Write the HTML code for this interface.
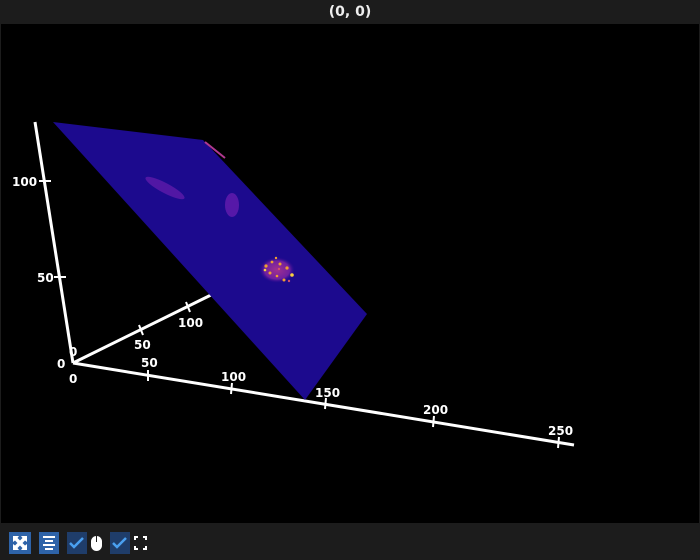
<!DOCTYPE html>
<html><head><meta charset="utf-8"><style>
html,body{margin:0;padding:0;background:#1c1c1c;width:700px;height:560px;overflow:hidden;font-family:"DejaVu Sans","Liberation Sans",sans-serif}
.top{position:absolute;left:0;top:0;width:700px;height:24px;background:#1c1c1c;color:#eee;font-size:14px;font-weight:bold;text-align:center;line-height:25px}
.main{position:absolute;left:1px;top:24px;width:698px;height:499px;background:#000}
.bar{position:absolute;left:0;top:523px;width:700px;height:37px;background:#1c1c1c}
</style></head><body>
<div class="top">(0, 0)</div>
<div class="main"></div>
<svg style="position:absolute;left:0;top:0" width="700" height="560">
<defs>
<radialGradient id="g1" cx="0.5" cy="0.5" r="0.5"><stop offset="0" stop-color="#a03090"/><stop offset="0.7" stop-color="#7020a0"/><stop offset="1" stop-color="#2a0890" stop-opacity="0"/></radialGradient>
</defs>
<g stroke="#fff" stroke-width="3" fill="none">
<line x1="73" y1="363" x2="35" y2="122"/>
<line x1="73" y1="363" x2="574" y2="445"/>
<line x1="73" y1="363" x2="215" y2="293"/>
<line x1="54" y1="277" x2="66" y2="277" stroke-width="2"/>
<line x1="39" y1="181" x2="51" y2="181" stroke-width="2"/>
<line x1="148" y1="370" x2="148" y2="381" stroke-width="2"/>
<line x1="232" y1="383" x2="231" y2="394" stroke-width="2"/>
<line x1="326" y1="398" x2="325" y2="409" stroke-width="2"/>
<line x1="434" y1="416" x2="433" y2="427" stroke-width="2"/>
<line x1="559" y1="437" x2="558" y2="448" stroke-width="2"/>
<line x1="139" y1="325" x2="143" y2="335" stroke-width="2"/>
<line x1="186" y1="302" x2="190" y2="312" stroke-width="2"/>
</g>
<polygon points="53,122 203,140 367,314 305,400" fill="#1c0a8e"/>
<ellipse cx="165" cy="188" rx="22" ry="5" transform="rotate(28 165 188)" fill="#5a1aa8" opacity="0.85"/>
<ellipse cx="232" cy="205" rx="7" ry="12" fill="#6a1eb0" opacity="0.75"/>
<path d="M205 142 Q215 150 225 158" stroke="#b03890" stroke-width="2" fill="none"/>
<ellipse cx="277" cy="270" rx="18" ry="13" fill="url(#g1)"/>
<g fill="#f0a030">
<circle cx="266" cy="266" r="1.6"/><circle cx="272" cy="262" r="1.4"/><circle cx="280" cy="264" r="1.5"/>
<circle cx="287" cy="268" r="1.6"/><circle cx="292" cy="275" r="1.8" fill="#f8d040"/><circle cx="270" cy="273" r="1.5"/>
<circle cx="277" cy="276" r="1.3"/><circle cx="284" cy="280" r="1.5"/><circle cx="265" cy="270" r="1.3" fill="#f8d040"/>
<circle cx="276" cy="258" r="1.2"/><circle cx="289" cy="281" r="1.2" fill="#d05070"/><circle cx="279" cy="269" r="1.2" fill="#d05070"/>
</g>
<g fill="#fff" font-size="12" font-weight="600">
<text x="12" y="186">100</text>
<text x="37" y="282">50</text>
<text x="57" y="368">0</text>
<text x="69" y="356">0</text>
<text x="69" y="383">0</text>
<text x="141" y="367">50</text>
<text x="221" y="381">100</text>
<text x="315" y="397">150</text>
<text x="423" y="414">200</text>
<text x="548" y="435">250</text>
<text x="134" y="349">50</text>
<text x="178" y="327">100</text>
</g>
</svg>
<div class="bar"></div>
<svg style="position:absolute;left:0;top:523px" width="200" height="37">
<rect x="9" y="9" width="22" height="22" fill="#2e63a8"/>
<path d="M13 13h6l-1.5 2 2.5 2.5 2.5-2.5-1.5-2h6v6l-2-1.5-2.5 2.5 2.5 2.5 2-1.5v6h-6l1.5-2-2.5-2.5-2.5 2.5 1.5 2h-6v-6l2 1.5 2.5-2.5-2.5-2.5-2 1.5z" fill="#fff"/>
<rect x="39" y="9" width="20" height="22" fill="#2e63a8"/>
<g stroke="#fff" stroke-width="2"><line x1="43" y1="14" x2="55" y2="14"/><line x1="45" y1="18" x2="53" y2="18"/><line x1="43" y1="22" x2="55" y2="22"/><line x1="45" y1="26" x2="53" y2="26"/></g>
<rect x="67" y="9" width="20" height="22" fill="#1f3d6a"/>
<path d="M70 20l4 4 9-9" stroke="#4aa0f0" stroke-width="2.5" fill="none"/>
<rect x="91" y="13" width="11" height="15" rx="5.5" fill="#fff"/>
<line x1="96.5" y1="13" x2="96.5" y2="19" stroke="#1c1c1c" stroke-width="1"/>
<rect x="110" y="9" width="20" height="22" fill="#1f3d6a"/>
<path d="M113 20l4 4 9-9" stroke="#4aa0f0" stroke-width="2.5" fill="none"/>
<g stroke="#fff" stroke-width="2" fill="none"><path d="M135 17v-3h3M143 14h3v3M146 23v3h-3M138 26h-3v-3"/></g>
</svg>
</body></html>
